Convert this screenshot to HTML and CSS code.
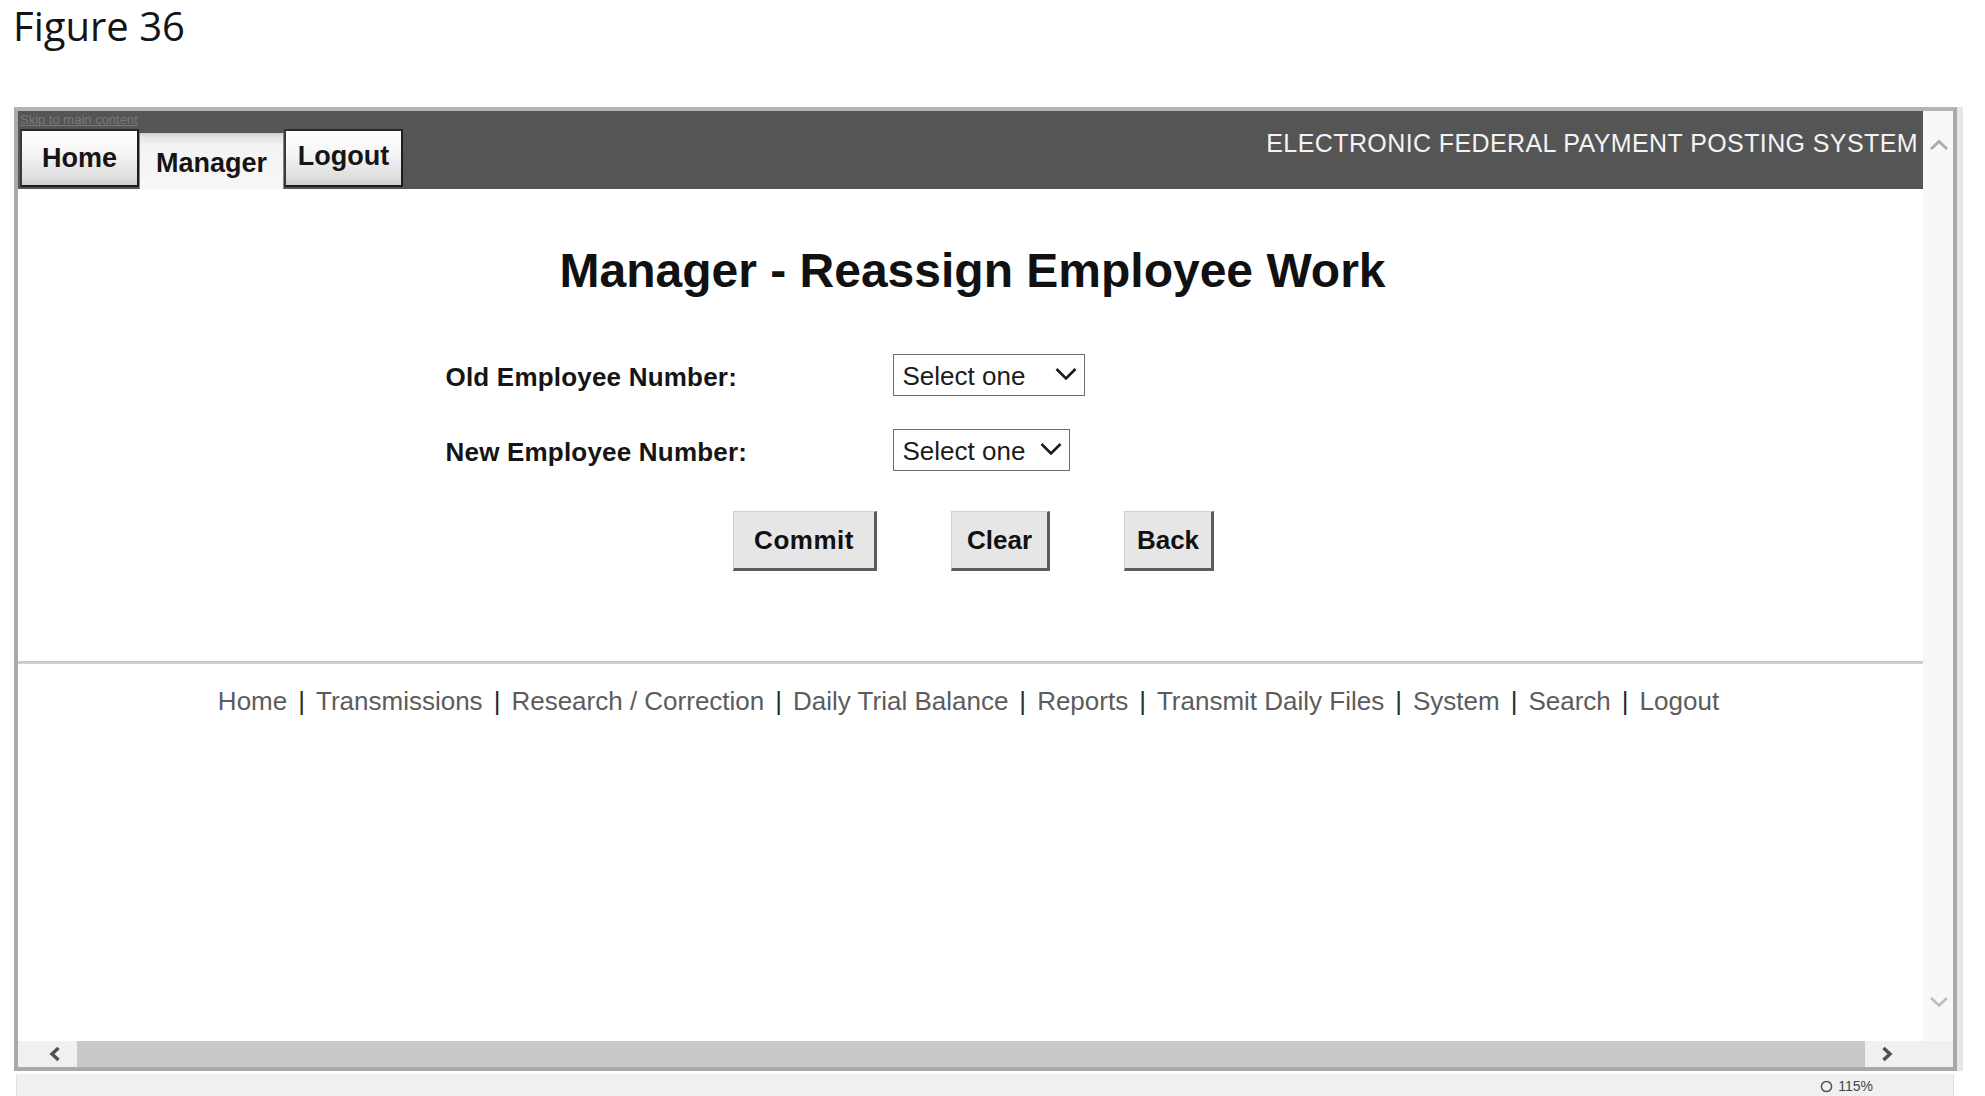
FILE: index.html
```html
<!DOCTYPE html>
<html lang="en">
<head>
<meta charset="utf-8">
<title>Figure 36 - Manager - Reassign Employee Work</title>
<link rel="stylesheet" href="styles.css">
</head>
<body>
<div class="caption">Figure 36</div>
<div class="window">
  <div class="viewport">
    <div class="header">
      <div class="header-left">
        <a class="skip" href="#main">Skip to main content</a>
        <div class="tabs">
          <div class="tab tab-home">Home</div>
          <div class="tab tab-manager">Manager</div>
          <div class="tab tab-logout">Logout</div>
        </div>
      </div>
      <div class="system-name">ELECTRONIC FEDERAL PAYMENT POSTING SYSTEM</div>
    </div>
    <div class="main" id="main">
      <h1 class="title">Manager - Reassign Employee Work</h1>
      <div class="form">
        <div class="row">
          <div class="label">Old Employee Number:</div>
          <div class="select select-old">
            <span class="select-text">Select one</span>
            <svg class="chev" viewBox="0 0 22 14" width="22" height="14"><path d="M1.5 2 L11 11.5 L20.5 2" fill="none" stroke="#1a1a1a" stroke-width="2.6"/></svg>
          </div>
        </div>
        <div class="row">
          <div class="label">New Employee Number:</div>
          <div class="select select-new">
            <span class="select-text">Select one</span>
            <svg class="chev" viewBox="0 0 22 14" width="22" height="14"><path d="M1.5 2 L11 11.5 L20.5 2" fill="none" stroke="#1a1a1a" stroke-width="2.6"/></svg>
          </div>
        </div>
      </div>
      <div class="buttons">
        <div class="btn btn-commit">Commit</div>
        <div class="btn btn-clear">Clear</div>
        <div class="btn btn-back">Back</div>
      </div>
      <div class="rule"></div>
      <div class="footer">
        <a href="#">Home</a><span class="sep">|</span><a href="#">Transmissions</a><span class="sep">|</span><a href="#">Research / Correction</a><span class="sep">|</span><a href="#">Daily Trial Balance</a><span class="sep">|</span><a href="#">Reports</a><span class="sep">|</span><a href="#">Transmit Daily Files</a><span class="sep">|</span><a href="#">System</a><span class="sep">|</span><a href="#">Search</a><span class="sep">|</span><a href="#">Logout</a>
      </div>
    </div>
  </div>
  <div class="vscroll">
    <svg class="vchev" viewBox="0 0 20 12" width="20" height="12"><path d="M2 10 L10 2.5 L18 10" fill="none" stroke="#acacac" stroke-width="3"/></svg>
    <svg class="vchev" viewBox="0 0 20 12" width="20" height="12"><path d="M2 2 L10 9.5 L18 2" fill="none" stroke="#bcbcbc" stroke-width="2.6"/></svg>
  </div>
  <div class="hscroll">
    <div class="harrow harrow-left">
      <svg viewBox="0 0 12 16" width="12" height="16"><path d="M9.5 2 L3 8 L9.5 14" fill="none" stroke="#505050" stroke-width="3.4"/></svg>
    </div>
    <div class="htrack"></div>
    <div class="harrow harrow-right">
      <svg viewBox="0 0 12 16" width="12" height="16"><path d="M2.5 2 L9 8 L2.5 14" fill="none" stroke="#505050" stroke-width="3.4"/></svg>
    </div>
  </div>
</div>
<div class="statusbar">
  <span class="zoom-level"><svg viewBox="0 0 14 14" width="13" height="13"><circle cx="7" cy="7" r="5.5" fill="none" stroke="#555" stroke-width="1.6"/></svg> 115%</span>
</div>
</body>
</html>
```

FILE: styles.css
```css
html, body {
  margin: 0;
  padding: 0;
  background: #ffffff;
}

body {
  font-family: "Liberation Sans", Arial, sans-serif;
  color: #111;
  width: 1985px;
  height: 1096px;
  overflow: hidden;
}

.caption {
  font-family: "Open Sans", "Noto Sans", sans-serif;
  font-size: 40px;
  line-height: 40px;
  color: #141414;
  padding: 6px 0 0 13px;
  height: 40px;
}

.window {
  margin: 61px 0 0 14px;
  width: 1935px;
  border: 4px solid #a9a9a9;
  border-top-color: #b4b4b4;
  box-shadow: 6px 0 0 #e6e6e6;
  display: grid;
  grid-template-columns: 1905px 30px;
  grid-template-rows: 930px 26px;
  background: #fff;
}

.viewport {
  overflow: hidden;
  background: #fff;
}

/* Header */
.header {
  height: 78px;
  background: #555555;
  display: flex;
  justify-content: space-between;
}

.header-left {
  display: flex;
  flex-direction: column;
  padding-left: 2px;
}

.skip {
  font-size: 13px;
  line-height: 15px;
  color: #787878;
  text-decoration: underline;
  margin-top: 1px;
}

.tabs {
  margin-top: auto;
  display: flex;
  align-items: flex-end;
}

.tab {
  box-sizing: border-box;
  display: flex;
  align-items: center;
  justify-content: center;
  font-weight: bold;
  font-size: 27px;
  color: #151515;
}

.tab-home,
.tab-logout {
  height: 58px;
  margin-bottom: 2px;
  border: 2px solid #1c1c1c;
  border-left-color: #3a3a3a;
  border-top-color: #2a2a2a;
  background: linear-gradient(#ffffff 0%, #f6f6f6 40%, #dedede 85%, #cfcfcf 100%);
}

.tab-home {
  width: 119px;
}

.tab-logout {
  width: 119px;
  padding-bottom: 4px;
}

.tab-manager {
  width: 145px;
  height: 56px;
  padding-top: 5px;
  background: linear-gradient(#cfcfcf 0px, #e6e6e6 5px, #f3f3f3 12px, #f7f7f7 100%);
  border-left: 1px solid #888;
  border-right: 1px solid #888;
}

.system-name {
  font-size: 25px;
  line-height: 25px;
  letter-spacing: 0.4px;
  color: #f4f4f4;
  padding: 20px 5px 0 0;
}

/* Main */
.main {
  background: #fff;
}

.title {
  margin: 58px 0 0 0;
  font-size: 48px;
  line-height: 48px;
  font-weight: bold;
  text-align: center;
  color: #111;
  padding-left: 4px;
}

.form {
  width: 1050px;
  margin: 59px auto 0 auto;
  padding-right: 2px;
  display: flex;
  flex-direction: column;
  gap: 33px;
}

.row {
  display: grid;
  grid-template-columns: 448px auto;
  align-items: center;
}

.label {
  font-size: 26px;
  font-weight: bold;
  color: #151515;
  padding-top: 4px;
  padding-left: 1px;
  letter-spacing: 0.2px;
}

.select {
  box-sizing: border-box;
  height: 42px;
  border: 1px solid #6f6f6f;
  background: #fff;
  display: flex;
  align-items: center;
  justify-content: space-between;
  padding: 0 7px 0 9px;
}

.select-old {
  width: 192px;
}

.select-new {
  width: 177px;
}

.select-text {
  font-size: 26px;
  color: #1c1c1c;
  padding-top: 2px;
}

.chev {
  display: block;
  margin-top: -3px;
}

.buttons {
  margin: 40px 0 0 0;
  display: flex;
  justify-content: center;
  gap: 74px;
  padding-left: 6px;
}

.btn {
  box-sizing: border-box;
  height: 60px;
  display: flex;
  align-items: center;
  justify-content: center;
  font-size: 26px;
  font-weight: bold;
  color: #111;
  background: #e6e6e6;
  border-style: solid;
  border-width: 1px 3px 3px 1px;
  border-color: #d0d0d0 #5c5c5c #5c5c5c #d0d0d0;
}

.btn-commit {
  width: 144px;
  letter-spacing: 0.5px;
}

.btn-clear {
  width: 99px;
}

.btn-back {
  width: 90px;
}

.rule {
  margin-top: 90px;
  height: 3px;
  background: linear-gradient(#c4c4c4, #d6d6d6);
}

.footer {
  margin-top: 22px;
  text-align: center;
  font-size: 26px;
  line-height: 30px;
  padding-right: 4px;
}

.footer a {
  color: #5c5c5c;
  text-decoration: none;
}

.sep {
  color: #2a2a2a;
  margin: 0 11px;
}

/* Scrollbars */
.vscroll {
  background: #f8f8f8;
  display: flex;
  flex-direction: column;
  justify-content: space-between;
  align-items: center;
  padding: 28px 0 33px 2px;
}

.vchev {
  display: block;
}

.hscroll {
  grid-column: 1 / span 2;
  display: flex;
  background: #f0f0f0;
}

.harrow {
  display: flex;
  align-items: center;
}

.harrow-left {
  width: 59px;
  padding-left: 31px;
  box-sizing: border-box;
}

.htrack {
  flex: 1;
  background: #c9c9c9;
}

.harrow-right {
  width: 88px;
  padding-left: 16px;
  box-sizing: border-box;
}

.statusbar {
  margin: 3px 0 0 16px;
  width: 1938px;
  height: 22px;
  background: #f0f0f0;
  border-left: 1px solid #e0e0e0;
  border-right: 1px solid #e0e0e0;
  display: flex;
  justify-content: flex-end;
  align-items: flex-end;
  padding-right: 80px;
  box-sizing: border-box;
}

.zoom-level {
  font-size: 14px;
  line-height: 16px;
  color: #444;
  display: flex;
  align-items: center;
  gap: 5px;
  padding-bottom: 2px;
}
```
